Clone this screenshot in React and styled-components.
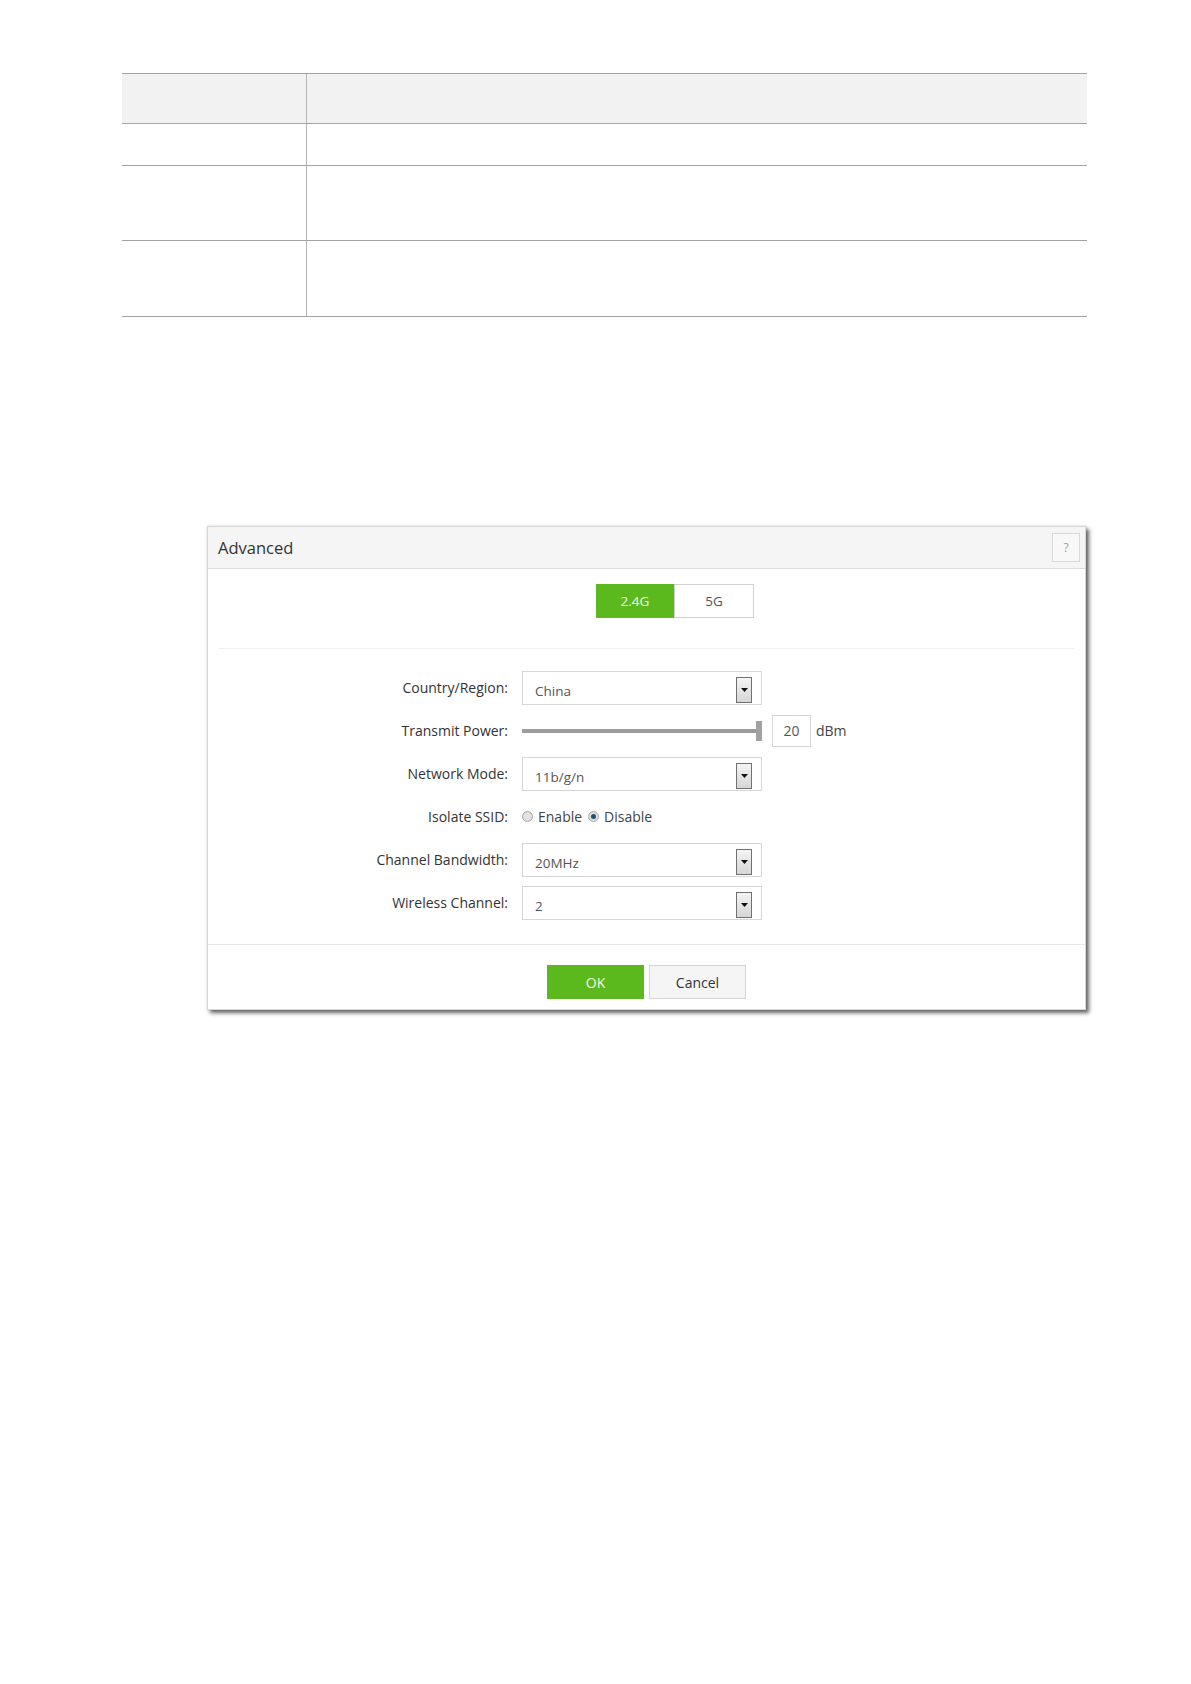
import React from "react";
import styled, { createGlobalStyle } from "styled-components";

const Global = createGlobalStyle`
  html, body { margin: 0; padding: 0; background: #ffffff; }
  body { font-family: "Open Sans", "Liberation Sans", sans-serif; }
  * { box-sizing: border-box; }
`;

const Page = styled.div`
  width: 1191px;
  min-height: 1684px;
  padding: 73px 0 0 122px;
`;

const Table = styled.div`
  width: 965px;
  border-top: 1px solid #a3a3a3;
`;

const TRow = styled.div`
  display: grid;
  grid-template-columns: 185px 1fr;
  height: ${(p) => p.$h}px;
  background: ${(p) => (p.$head ? "#f2f2f2" : "#ffffff")};
  border-bottom: 1px solid #a3a3a3;
`;

const TCell = styled.div`
  border-right: ${(p) => (p.$first ? "1px solid #b4b4b4" : "none")};
`;

const Dialog = styled.div`
  margin: 209px 0 0 85px;
  width: 879px;
  background: #ffffff;
  border: 1px solid #d8d8d8;
  box-shadow: 3px 3px 4px rgba(0, 0, 0, 0.6), 0 0 3px rgba(0, 0, 0, 0.12);
`;

const Header = styled.div`
  height: 42px;
  display: flex;
  align-items: center;
  justify-content: space-between;
  padding: 0 5px 0 10px;
  background: #f5f5f5;
  border-bottom: 1px solid #dedede;
`;

const Title = styled.div`
  font-size: 16.5px;
  color: #333333;
`;

const HelpBtn = styled.div`
  width: 28px;
  height: 29px;
  border: 1px solid #d9d9d9;
  background: #f8f8f8;
  color: #a0a0a0;
  font-size: 12px;
  display: flex;
  align-items: center;
  justify-content: center;
`;

const TabBar = styled.div`
  display: flex;
  padding: 15px 0 0 388px;
  height: 79px;
`;

const Tab = styled.div`
  width: ${(p) => p.$w}px;
  height: 34px;
  display: flex;
  align-items: center;
  justify-content: center;
  font-size: 13.5px;
  background: ${(p) => (p.$active ? "#5bb91d" : "#ffffff")};
  color: ${(p) => (p.$active ? "#f2fbe8" : "#555555")};
  border: 1px solid ${(p) => (p.$active ? "#5bb91d" : "#d0d0d0")};
`;

const Divider = styled.div`
  margin: 0 11px;
  border-top: 1px solid #efefef;
`;

const Form = styled.div`
  padding: 17px 0 20px 0;
`;

const Row = styled.div`
  height: 43px;
  display: grid;
  grid-template-columns: 300px 1fr;
  column-gap: 14px;
  align-items: center;
`;

const Label = styled.div`
  text-align: right;
  font-size: 14px;
  color: #333333;
`;

const Control = styled.div`
  display: flex;
  align-items: center;
  font-size: 14px;
  color: #444444;
`;

const Select = styled.div`
  width: 240px;
  height: 34px;
  border: 1px solid #d6d6d6;
  display: flex;
  align-items: flex-end;
  justify-content: space-between;
  padding: 0 9px 1px 12px;
  font-size: 13.5px;
  color: #555555;
`;

const SelectText = styled.span`
  padding-bottom: 3px;
`;

const ArrowBox = styled.div`
  width: 16px;
  height: 26px;
  border: 1px solid #707070;
  background: linear-gradient(#f4f4f4, #d6d6d6);
  display: flex;
  align-items: center;
  justify-content: center;
`;

const Slider = styled.div`
  width: 240px;
  height: 22px;
  display: flex;
  align-items: center;
`;

const Track = styled.div`
  flex: 1;
  height: 4px;
  background: #9c9c9c;
`;

const Handle = styled.div`
  width: 6px;
  height: 20px;
  background: #a2a2a2;
`;

const NumBox = styled.div`
  margin-left: 10px;
  width: 39px;
  height: 32px;
  border: 1px solid #d6d6d6;
  display: flex;
  align-items: center;
  justify-content: center;
  color: #555555;
`;

const Unit = styled.span`
  margin-left: 5px;
  color: #444444;
`;

const Radio = styled.span`
  width: 11px;
  height: 11px;
  border-radius: 50%;
  border: 1px solid #a8a8a8;
  background: radial-gradient(circle, #e8e8e8 0%, #d8d8d8 100%);
  display: inline-flex;
  align-items: center;
  justify-content: center;
  margin: 0 5px 0 ${(p) => p.$ml}px;

  &::after {
    content: "";
    display: ${(p) => (p.$on ? "block" : "none")};
    width: 5px;
    height: 5px;
    border-radius: 50%;
    background: #1f4f74;
  }
`;

const Footer = styled.div`
  border-top: 1px solid #e6e6e6;
  padding: 20px 0 10px;
  display: flex;
  justify-content: center;
  gap: 5px;
`;

const Button = styled.div`
  width: 97px;
  height: 34px;
  display: flex;
  align-items: center;
  justify-content: center;
  font-size: 14px;
  background: ${(p) => (p.$primary ? "#5bb91d" : "#f5f5f5")};
  color: ${(p) => (p.$primary ? "#eef9e4" : "#333333")};
  border: 1px solid ${(p) => (p.$primary ? "#5bb91d" : "#d4d4d4")};
`;

const Arrow = () => (
  <ArrowBox>
    <svg width="7" height="4" viewBox="0 0 7 4">
      <path d="M0 0 L7 0 L3.5 4 Z" fill="#111" />
    </svg>
  </ArrowBox>
);

const SelectField = ({ value }) => (
  <Select>
    <SelectText>{value}</SelectText>
    <Arrow />
  </Select>
);

export default function App() {
  return (
    <>
      <Global />
      <Page>
        <Table>
          <TRow $h={50} $head>
            <TCell $first />
            <TCell />
          </TRow>
          <TRow $h={42}>
            <TCell $first />
            <TCell />
          </TRow>
          <TRow $h={75}>
            <TCell $first />
            <TCell />
          </TRow>
          <TRow $h={76}>
            <TCell $first />
            <TCell />
          </TRow>
        </Table>

        <Dialog>
          <Header>
            <Title>Advanced</Title>
            <HelpBtn>?</HelpBtn>
          </Header>
          <TabBar>
            <Tab $active $w={78}>2.4G</Tab>
            <Tab $w={80}>5G</Tab>
          </TabBar>
          <Divider />
          <Form>
            <Row>
              <Label>Country/Region:</Label>
              <Control>
                <SelectField value="China" />
              </Control>
            </Row>
            <Row>
              <Label>Transmit Power:</Label>
              <Control>
                <Slider>
                  <Track />
                  <Handle />
                </Slider>
                <NumBox>20</NumBox>
                <Unit>dBm</Unit>
              </Control>
            </Row>
            <Row>
              <Label>Network Mode:</Label>
              <Control>
                <SelectField value="11b/g/n" />
              </Control>
            </Row>
            <Row>
              <Label>Isolate SSID:</Label>
              <Control>
                <Radio $ml={0} />
                Enable
                <Radio $ml={6} $on />
                Disable
              </Control>
            </Row>
            <Row>
              <Label>Channel Bandwidth:</Label>
              <Control>
                <SelectField value="20MHz" />
              </Control>
            </Row>
            <Row>
              <Label>Wireless Channel:</Label>
              <Control>
                <SelectField value="2" />
              </Control>
            </Row>
          </Form>
          <Footer>
            <Button $primary>OK</Button>
            <Button>Cancel</Button>
          </Footer>
        </Dialog>
      </Page>
    </>
  );
}
